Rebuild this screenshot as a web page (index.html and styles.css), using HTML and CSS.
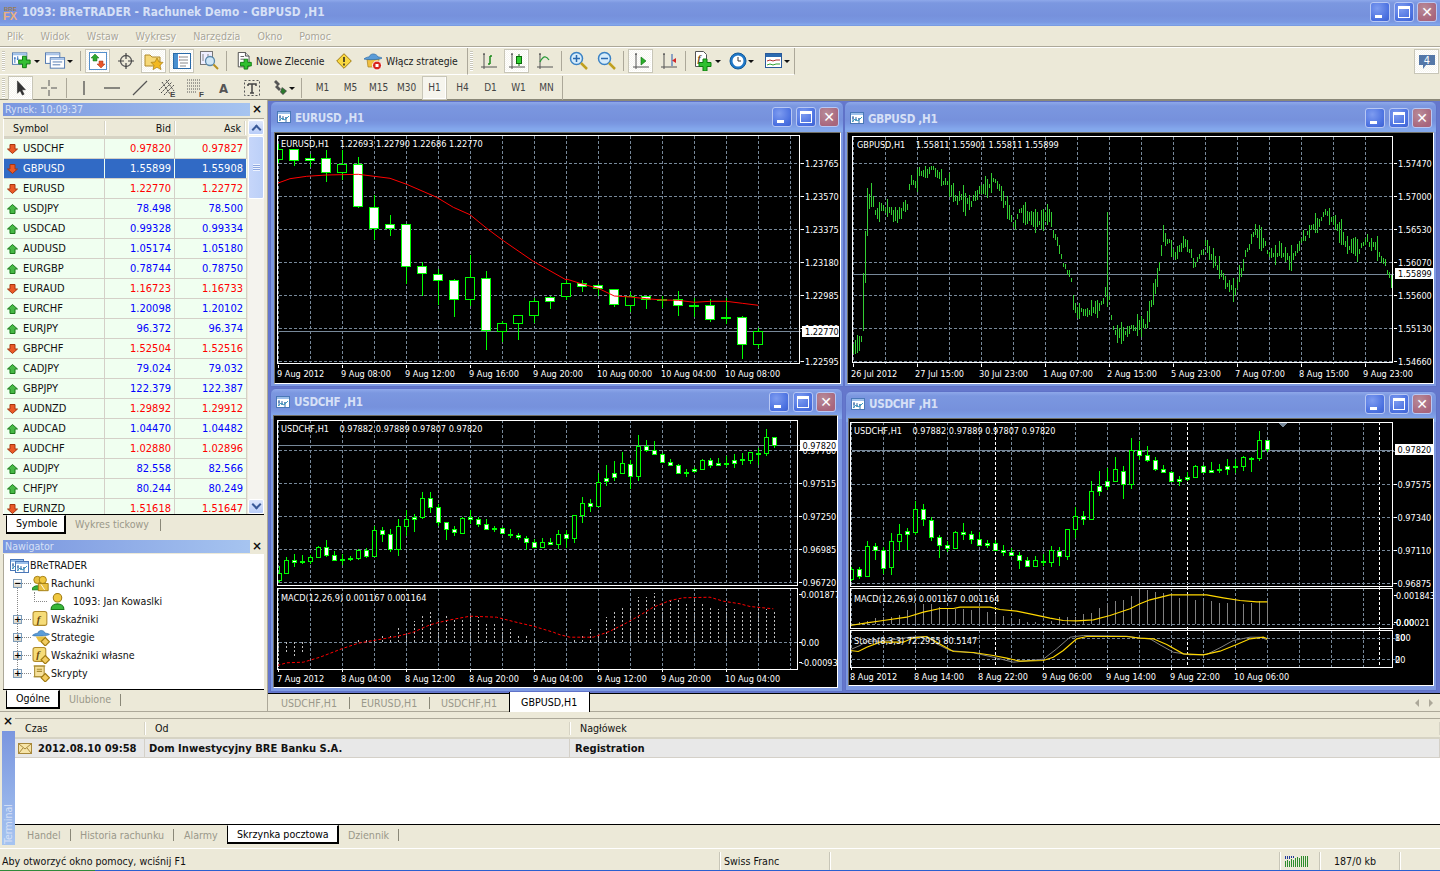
FILE: index.html
```html
<!DOCTYPE html>
<html lang="pl">
<head>
<meta charset="utf-8">
<title>1093: BReTRADER - Rachunek Demo - GBPUSD ,H1</title>
<link rel="stylesheet" href="styles.css">
</head>
<body>
<svg class="defs" aria-hidden="true">
  <symbol id="i-chartdoc" viewBox="0 0 14 14">
    <rect x=".5" y="1.5" width="13" height="11" fill="#fff" stroke="#4a78b8"/><rect x="1" y="2" width="12" height="2" fill="#9cc0ea"/>
    <path d="M3 5v6M2 7h2M6 6v4M5 9h2M9 7v5M8 8h2" stroke="#3a6aa8" fill="none"/><path d="M2 11l3-3 3 2 4-4" stroke="#3aa0c0" fill="none"/>
  </symbol>
  <symbol id="i-newchart" viewBox="0 0 22 18">
    <rect x=".5" y=".5" width="15" height="12" fill="#fff" stroke="#5078b0"/><rect x="1" y="1" width="14" height="2" fill="#9cc0ea"/>
    <path d="M3 5v6M2 6h2M6 4v4M5 7h2" stroke="#2f6fc0" fill="none"/>
    <path d="M11 4h4v4h4v4h-4v4h-4v-4H7V8h4z" fill="#35c035" stroke="#0e7a0e"/>
  </symbol>
  <symbol id="i-profiles" viewBox="0 0 22 18">
    <rect x=".5" y=".5" width="15" height="11" fill="#fff" stroke="#5078b0"/><rect x="1" y="1" width="14" height="2" fill="#a8c4ea"/>
    <rect x="5.500" y="5.500" width="15" height="11" fill="#fff" stroke="#5078b0"/><rect x="6" y="6" width="14" height="2" fill="#a8c4ea"/>
    <path d="M8 10h10M8 13h8" stroke="#5078b0"/>
  </symbol>
  <symbol id="i-market" viewBox="0 0 18 18">
    <rect x=".5" y=".5" width="17" height="17" fill="#fff" stroke="#5590cc"/>
    <path d="M6 2l4 4H8v3H4V6H2z" fill="#2ea82e" stroke="#176d17" stroke-width=".5"/><path d="M12 16l-4-4h2V9h4v3h2z" fill="#e8562a" stroke="#a03010" stroke-width=".5"/>
  </symbol>
  <symbol id="i-cross" viewBox="0 0 18 18"><circle cx="9" cy="9" r="5.500" fill="none" stroke="#555" stroke-width="1.300"/><path d="M9 1v6M9 11v6M1 9h6M11 9h6" stroke="#444" fill="none" stroke-width="1.200"/></symbol>
  <symbol id="i-folder" viewBox="0 0 20 20">
    <path d="M1 4h5l2 2h8v9H1z" fill="#f6d878" stroke="#b08a2a"/><path d="M13 7l2 4 4 .4-3 3 1 4.200-4-2.300-4 2.300 1-4.200-3-3 4-.4z" fill="#f2b820" stroke="#a87c10" stroke-width=".7"/>
  </symbol>
  <symbol id="i-nav" viewBox="0 0 18 18">
    <rect x=".5" y="1.500" width="17" height="15" fill="#fff" stroke="#2a6aa8"/><rect x="1" y="2" width="4" height="14" fill="#4a90d0"/>
    <path d="M7 5h8M7 8h8M7 11h8M7 14h6" stroke="#8a8a8a"/><path d="M6 5h1M6 8h1" stroke="#d03030"/>
  </symbol>
  <symbol id="i-zoomdoc" viewBox="0 0 20 20">
    <rect x=".5" y=".5" width="12" height="13" fill="#eef" stroke="#777"/><path d="M3 3v7M8 3v7" stroke="#888"/>
    <circle cx="10" cy="10" r="4.500" fill="#cfe6f6" stroke="#5a88aa" stroke-width="1.300"/><path d="M13.500 13.500l4.500 4.500" stroke="#b89020" stroke-width="2"/>
  </symbol>
  <symbol id="i-order" viewBox="0 0 18 20">
    <path d="M1.500.5h8l4 4v12h-12z" fill="#fff" stroke="#444"/><path d="M9.500.5v4h4" fill="#ddd" stroke="#444"/><path d="M4 5h4M4 8h4" stroke="#555"/>
    <path d="M8 8h4v3.500h4v4h-4V19H8v-3.500H4v-4h4z" fill="#2fc02f" stroke="#0e7a0e"/>
  </symbol>
  <symbol id="i-warn" viewBox="0 0 16 16"><path d="M8 .7L15.300 8 8 15.300.7 8z" fill="#f9d840" stroke="#a07a10"/><path d="M8 4v5M8 10.500v2" stroke="#222" stroke-width="1.500"/></symbol>
  <symbol id="i-hat" viewBox="0 0 20 20">
    <path d="M4 8h12l-1 8H5z" fill="#f2c040" stroke="#a88020" stroke-width=".7"/>
    <path d="M1 8c2 1 16 1 18-1-2-1-3-1-4-1-1-3-7-5-9 0-2 0-4 1-5 2z" fill="#5a9cd8" stroke="#2a6aa8" stroke-width=".7"/>
    <circle cx="14" cy="14.500" r="4.500" fill="#d8241c" stroke="#fff"/><rect x="12.500" y="13" width="3" height="3" fill="#fff"/>
  </symbol>
  <symbol id="i-axis" viewBox="0 0 18 18"><path d="M4 1v15M1 15h16" stroke="#555" fill="none"/><path d="M3 3l1-2 1 2M3 16l1 1 1-1" fill="#555"/></symbol>
  <symbol id="i-bars" viewBox="0 0 18 18"><use href="#i-axis"/><path d="M10 4v8M10 4h2M8 12h2" stroke="#1a8a1a" fill="none" stroke-width="1.500"/></symbol>
  <symbol id="i-candle" viewBox="0 0 18 18"><use href="#i-axis"/><path d="M11 2v12" stroke="#0a6a0a"/><rect x="8.500" y="4.500" width="5" height="7" fill="#30d030" stroke="#0a6a0a"/></symbol>
  <symbol id="i-line" viewBox="0 0 18 18"><use href="#i-axis"/><path d="M4 10c3-6 6-7 9-2" stroke="#2a9a3a" fill="none" stroke-width="1.300"/></symbol>
  <symbol id="i-zoomin" viewBox="0 0 20 20"><circle cx="7.500" cy="7.500" r="6" fill="#d6ecfb" stroke="#3a82c4" stroke-width="1.500"/><path d="M12 12l6 6" stroke="#c0a020" stroke-width="2.500"/><path d="M4 7.500h7M7.500 4v7" stroke="#2a6ab0" stroke-width="1.500"/></symbol>
  <symbol id="i-zoomout" viewBox="0 0 20 20"><circle cx="7.500" cy="7.500" r="6" fill="#d6ecfb" stroke="#3a82c4" stroke-width="1.500"/><path d="M12 12l6 6" stroke="#c0a020" stroke-width="2.500"/><path d="M4 7.500h7" stroke="#2a6ab0" stroke-width="1.500"/></symbol>
  <symbol id="i-scroll" viewBox="0 0 18 18"><use href="#i-axis"/><path d="M9 5l5 4-5 4z" fill="#2ab02a" stroke="#0a6a0a" stroke-width=".6"/></symbol>
  <symbol id="i-shift" viewBox="0 0 18 18"><use href="#i-axis"/><path d="M12 2v12" stroke="#2a5ab0"/><path d="M16 6l-4 2.500 4 2.500z" fill="#d02a2a"/></symbol>
  <symbol id="i-clock" viewBox="0 0 18 18"><circle cx="9" cy="9" r="8" fill="#1e78c8" stroke="#145a9a"/><circle cx="9" cy="9" r="5.500" fill="#fff"/><path d="M9 5v4h3" stroke="#333" fill="none"/></symbol>
  <symbol id="i-tmpl" viewBox="0 0 18 16"><rect x=".5" y=".5" width="16" height="14" fill="#fff" stroke="#2a5a9a"/><rect x="1" y="1" width="15" height="3" fill="#2a6ab0"/><path d="M2 8l3-1 3 1 3-1 4 0" stroke="#b03030" fill="none"/><path d="M2 12l3-1 3 1 3-1 4 0" stroke="#30a030" fill="none"/></symbol>
  <symbol id="i-group" viewBox="0 0 20 18">
    <circle cx="6" cy="5" r="4" fill="#e8c040" stroke="#a07a10"/><path d="M0 16c0-6 12-6 12 0z" fill="#38b038" stroke="#1a7a1a"/>
    <circle cx="12" cy="5" r="4" fill="#f0c840" stroke="#a07a10"/><path d="M7 9h11v8H7z" fill="#e8c040" stroke="#a07a10"/><path d="M10 10l4 6" stroke="#fff"/>
  </symbol>
  <symbol id="i-person" viewBox="0 0 14 16"><circle cx="7" cy="4.500" r="4" fill="#f0c840" stroke="#a07a10"/><path d="M1 15.500c0-7 12-7 12 0z" fill="#38b838" stroke="#1a7a1a"/></symbol>
  <symbol id="i-strat" viewBox="0 0 16 16"><path d="M0 6c2 1 14 1 16-1-2-1-3-1-4-1-1-3-6-4-7 0-2 0-4 1-5 2z" fill="#5a9cd8" stroke="#2a6aa8" stroke-width=".6"/><path d="M3 7h10l-3 5H6z" fill="#e8c040"/><path d="M12 8l4 4-4 4-4-4z" fill="#f2cc60" stroke="#a07a10"/></symbol>
  <symbol id="i-script" viewBox="0 0 16 16"><path d="M2 1h9v10H2z" fill="#f6e09a" stroke="#a88a30"/><path d="M1 1h11M1 11h10M4 4h5M4 6h5" stroke="#a88a30"/><path d="M12 8l4 4-4 4-4-4z" fill="#f2cc60" stroke="#a07a10"/></symbol>
  <symbol id="i-arrow" viewBox="0 0 16 18"><path d="M4 1v14l3-3 2.500 5 2-1-2.500-5h4z" fill="#333" stroke="#111" stroke-width=".5"/></symbol>
  <symbol id="i-plus" viewBox="0 0 18 18"><path d="M9 1v6M9 11v6M1 9h6M11 9h6" stroke="#555"/></symbol>
  <symbol id="i-vline" viewBox="0 0 18 18"><path d="M9 2v14" stroke="#444" stroke-width="1.200"/></symbol>
  <symbol id="i-hline" viewBox="0 0 18 18"><path d="M1 9h16" stroke="#444" stroke-width="1.200"/></symbol>
  <symbol id="i-trend" viewBox="0 0 18 18"><path d="M2 16L16 2" stroke="#555" stroke-width="1.200"/></symbol>
  <symbol id="i-tbox" viewBox="0 0 16 16"><rect x=".5" y=".5" width="15" height="15" fill="none" stroke="#555" stroke-dasharray="2 2"/><path d="M4 4h8v2M8 4v9M6 13h4M4 4v2" stroke="#444" stroke-width="1.500" fill="none"/></symbol>
  <symbol id="i-draw" viewBox="0 0 18 18"><path d="M5 1l4 4-2 2 3 3-2 2-4-4 2-2-3-3zM11 8l5 4-4 4-3-3z" fill="#555"/><path d="M11 9l4 3-3 3-2-2z" fill="#2a7a2a"/></symbol>
  <symbol id="i-msg" viewBox="0 0 18 16"><path d="M1 1h16v10H8l-3 4v-4H1z" fill="#5578a8"/></symbol>
  <symbol id="i-mail" viewBox="0 0 14 11"><rect x=".5" y=".5" width="13" height="10" fill="#f6e4a8" stroke="#a8883a"/><path d="M1 1l6 5 6-5M1 10l4-5M13 10L9 5" stroke="#a8883a" fill="none"/></symbol>
  <symbol id="i-gauge" viewBox="0 0 24 12"><path d="M1.500 12V6M3.500 12V5M5.500 12V6M7.500 12V4M9.500 12V5M11.500 12V3M13.500 12V2M15.500 12V3M17.500 12V1M19.500 12V1M21.500 12V1M23.500 12V1" stroke="#2c8c2c"/><path d="M1.500 4V1M3.500 4V1M5.500 4V1M7.500 3V1M9.500 3V1" stroke="#223a9a"/></symbol>
</svg>

<div class="app">
  <header class="app-title">
    <svg class="logo" viewBox="0 0 20 16"><text x="2" y="6" class="logo-a">BRE</text><text x="1" y="15" class="logo-b">FX</text></svg>
    <span class="app-title-text">1093: BReTRADER - Rachunek Demo - GBPUSD ,H1</span>
    <span class="caps app-caps">
      <span class="cap"><i class="g-min"></i></span><span class="cap"><i class="g-max"></i></span><span class="cap cap-x"><i class="g-x">✕</i></span>
    </span>
  </header>

  <nav class="menu">
    <span>Plik</span><span>Widok</span><span>Wstaw</span><span>Wykresy</span><span>Narzędzia</span><span>Okno</span><span>Pomoc</span>
  </nav>

  <div class="toolbars">
    <div class="tbrow tb1">
      <div class="tbgroup g1">
        <span class="grip"></span>
        <span class="tb drop w30"><svg class="ic-wide"><use href="#i-newchart"/></svg><b class="caret"></b></span>
        <span class="tb drop w31"><svg class="ic-wide"><use href="#i-profiles"/></svg><b class="caret"></b></span>
        <span class="sep sep-a"></span>
        <span class="tb on"><svg class="ic18"><use href="#i-market"/></svg></span>
        <span class="tb"><svg class="ic18"><use href="#i-cross"/></svg></span>
        <span class="tb on"><svg class="ic20"><use href="#i-folder"/></svg></span>
        <span class="tb on"><svg class="ic18"><use href="#i-nav"/></svg></span>
        <span class="tb"><svg class="ic20"><use href="#i-zoomdoc"/></svg></span>
        <span class="sep sep-b"></span>
        <span class="tb txt w96"><svg class="ic18"><use href="#i-order"/></svg><em>Nowe Zlecenie</em></span>
        <span class="tb"><svg class="ic16"><use href="#i-warn"/></svg></span>
        <span class="tb txt w105"><svg class="ic20"><use href="#i-hat"/></svg><em>Włącz strategie</em></span>
      </div>
      <div class="tbgroup g2">
        <span class="grip"></span>
        <span class="tb"><svg class="ic18"><use href="#i-bars"/></svg></span>
        <span class="tb on"><svg class="ic18"><use href="#i-candle"/></svg></span>
        <span class="tb"><svg class="ic18"><use href="#i-line"/></svg></span>
        <span class="sep sep-n"></span>
        <span class="tb"><svg class="ic20"><use href="#i-zoomin"/></svg></span>
        <span class="tb"><svg class="ic20"><use href="#i-zoomout"/></svg></span>
        <span class="sep sep-n"></span>
        <span class="tb on"><svg class="ic18"><use href="#i-scroll"/></svg></span>
        <span class="tb"><svg class="ic18"><use href="#i-shift"/></svg></span>
        <span class="sep sep-n"></span>
        <span class="tb drop w32"><svg class="ic20" viewBox="0 0 20 20"><path d="M1.500.5h8l3 3v12h-11z" fill="#fff" stroke="#555"/><text x="3.500" y="11" class="icon-f">f</text><path d="M9 8h4v3.500h4v4h-4V20H9v-4.500H5v-4h4z" fill="#2fc02f" stroke="#0e7a0e"/></svg><b class="caret"></b></span>
        <span class="tb drop w33"><svg class="ic18"><use href="#i-clock"/></svg><b class="caret"></b></span>
        <span class="tb drop w33"><svg class="ic18"><use href="#i-tmpl"/></svg><b class="caret"></b></span>
      </div>
      <span class="tb on msgbtn"><svg class="ic18"><use href="#i-msg"/></svg><em class="msgnum">4</em></span>
    </div>
    <div class="tbrow tb2">
      <span class="grip"></span>
      <span class="tb on"><svg class="ic16"><use href="#i-arrow"/></svg></span>
      <span class="tb"><svg class="ic18"><use href="#i-plus"/></svg></span>
      <span class="sep sep-c"></span>
      <span class="tb"><svg class="ic18"><use href="#i-vline"/></svg></span>
      <span class="tb"><svg class="ic18"><use href="#i-hline"/></svg></span>
      <span class="tb"><svg class="ic18"><use href="#i-trend"/></svg></span>
      <span class="tb"><svg class="ic20" viewBox="0 0 20 20"><path d="M1 12L12 1M3 15L14 4M6 17L16 7M4 4l8 12M8 2l8 11" stroke="#444" stroke-dasharray="2 1" fill="none"/><text x="12" y="19" class="icon-e">E</text></svg></span>
      <span class="tb"><svg class="ic20" viewBox="0 0 20 20"><path d="M1 2h14M1 5h14M1 8h14M1 11h14M1 14h10" stroke="#555" stroke-dasharray="1 1"/><text x="13" y="19" class="icon-e">F</text></svg></span>
      <span class="tb"><em class="tool-a">A</em></span>
      <span class="tb"><svg class="ic16"><use href="#i-tbox"/></svg></span>
      <span class="tb w31"><svg class="ic18"><use href="#i-draw"/></svg><b class="caret"></b></span>
      <span class="sep sep-d"></span>
      <span class="tf">M1</span><span class="tf">M5</span><span class="tf">M15</span><span class="tf">M30</span><span class="tf on">H1</span><span class="tf">H4</span><span class="tf">D1</span><span class="tf">W1</span><span class="tf">MN</span>
      <span class="sep sep-e"></span>
    </div>
  </div>

  <div class="main">
    <aside class="side">
      <section class="market">
        <div class="dock-title"><span class="dock-name">Rynek: 10:09:37</span><span class="dock-x">×</span></div>
        <div class="mw">
          <div class="mw-list">
            <div class="mw-head"><span class="c-sym">Symbol</span><span class="c-num">Bid</span><span class="c-num c-last">Ask</span></div>
            <div id="rows" class="mw-rows"></div>
          </div>
          <div class="sbar">
            <span class="sb-btn"><i class="chev-up"></i></span>
            <span class="sb-thumb"><i class="sb-lines"></i></span>
            <span class="sb-track"></span>
            <span class="sb-btn"><i class="chev-dn"></i></span>
          </div>
        </div>
        <div class="tabs">
          <span class="tab on t-sym">Symbole</span><span class="tab t-tick">Wykres tickowy</span>
        </div>
      </section>
      <section class="navig">
        <div class="dock-title"><span class="dock-name">Nawigator</span><span class="dock-x">×</span></div>
        <div class="tree">
          <div class="tn root"><svg class="ic14"><use href="#i-chartdoc"/></svg><svg class="ic14 over"><use href="#i-chartdoc"/></svg><span>BReTRADER</span></div>
          <div class="tn lv1"><i class="box">−</i><i class="dots"></i><svg class="ic-t"><use href="#i-group"/></svg><span>Rachunki</span></div>
          <div class="tn lv2"><i class="dots2"></i><svg class="ic-t"><use href="#i-person"/></svg><span>1093: Jan Kowaslki</span></div>
          <div class="tn lv1"><i class="box">+</i><i class="dots"></i><svg class="ic-t" viewBox="0 0 16 16"><rect x=".5" y=".5" width="13" height="13" rx="2" fill="#f6dc78" stroke="#b08a2a"/><text x="4" y="11" class="icon-f">f</text></svg><span>Wskaźniki</span></div>
          <div class="tn lv1"><i class="box">+</i><i class="dots"></i><svg class="ic-t"><use href="#i-strat"/></svg><span>Strategie</span></div>
          <div class="tn lv1"><i class="box">+</i><i class="dots"></i><svg class="ic-t" viewBox="0 0 16 16"><rect x=".5" y=".5" width="12" height="13" rx="2" fill="#f6dc78" stroke="#b08a2a"/><text x="3.500" y="10.500" class="icon-f">f</text><path d="M12 8l4 4-4 4-4-4z" fill="#f2cc60" stroke="#a07a10"/></svg><span>Wskaźniki własne</span></div>
          <div class="tn lv1"><i class="box">+</i><i class="dots"></i><svg class="ic-t"><use href="#i-script"/></svg><span>Skrypty</span></div>
          <i class="tree-spine"></i>
        </div>
        <div class="tabs">
          <span class="tab on t-og">Ogólne</span><span class="tab t-ul">Ulubione</span>
        </div>
      </section>
    </aside>

    <div class="work">
      <div class="mdi">
        <article class="win w1">
          <div class="win-title"><svg class="ic14"><use href="#i-chartdoc"/></svg><span class="win-name">EURUSD ,H1</span>
            <span class="caps"><span class="cap"><i class="g-min"></i></span><span class="cap"><i class="g-max"></i></span><span class="cap cap-x"><i class="g-x">✕</i></span></span></div>
          <div class="client" id="c1"></div>
        </article>
        <article class="win w2">
          <div class="win-title"><svg class="ic14"><use href="#i-chartdoc"/></svg><span class="win-name">GBPUSD ,H1</span>
            <span class="caps"><span class="cap"><i class="g-min"></i></span><span class="cap"><i class="g-max"></i></span><span class="cap cap-x"><i class="g-x">✕</i></span></span></div>
          <div class="client" id="c2"></div>
        </article>
        <article class="win w3">
          <div class="win-title"><svg class="ic14"><use href="#i-chartdoc"/></svg><span class="win-name">USDCHF ,H1</span>
            <span class="caps"><span class="cap"><i class="g-min"></i></span><span class="cap"><i class="g-max"></i></span><span class="cap cap-x"><i class="g-x">✕</i></span></span></div>
          <div class="client" id="c3"></div>
        </article>
        <article class="win w4">
          <div class="win-title"><svg class="ic14"><use href="#i-chartdoc"/></svg><span class="win-name">USDCHF ,H1</span>
            <span class="caps"><span class="cap"><i class="g-min"></i></span><span class="cap"><i class="g-max"></i></span><span class="cap cap-x"><i class="g-x">✕</i></span></span></div>
          <div class="client" id="c4"></div>
        </article>
      </div>
      <div class="chart-tabs">
        <span class="ctab">USDCHF,H1</span><span class="ctab">EURUSD,H1</span><span class="ctab ct-last">USDCHF,H1</span><span class="ctab-on">GBPUSD,H1</span>
        <span class="ct-arrows"><i class="ct-l"></i><i class="ct-r"></i></span>
      </div>
    </div>
  </div>

  <section class="terminal">
    <div class="term-strip"><span class="term-x">×</span><div class="term-name"><span>Terminal</span></div></div>
    <div class="term-body">
      <div class="t-head"><span class="th1">Czas</span><span class="th2">Od</span><span class="th3">Nagłówek</span></div>
      <div class="t-row">
        <span class="td1"><svg class="ic-mail"><use href="#i-mail"/></svg>2012.08.10 09:58</span><span class="td2">Dom Inwestycyjny BRE Banku S.A.</span><span class="td3">Registration</span>
      </div>
      <div class="t-empty"></div>
      <div class="tabs term-tabs">
        <span class="tab tt1">Handel</span><span class="tab tt2">Historia rachunku</span><span class="tab tt3">Alarmy</span><span class="tab on tt4">Skrzynka pocztowa</span><span class="tab tt5">Dziennik</span>
      </div>
    </div>
  </section>

  <footer class="status">
    <span class="st st1">Aby otworzyć okno pomocy, wciśnij F1</span>
    <span class="st st2">Swiss Franc</span>
    <span class="st st3"></span>
    <span class="st st4"><svg class="ic-gauge"><use href="#i-gauge"/></svg></span>
    <span class="st st5">187/0 kb</span>
    <span class="st st6"></span>
  </footer>
  <div class="taskline"></div>
</div>
<script src="script.js"></script>
</body>
</html>
```
FILE: styles.css
```css
* { box-sizing: border-box; }
html, body { margin: 0; height: 100%; overflow: hidden; }
body {
  width: 1440px; height: 871px; background: #ece9d8; color: #111;
  font: 10.600px/1 "DejaVu Sans Condensed", "DejaVu Sans", "Liberation Sans", sans-serif;
}
i, em, b { font-style: normal; font-weight: normal; }
.defs { position: absolute; width: 0; height: 0; }
.app { display: flex; flex-direction: column; width: 1440px; height: 871px; }
.icon-f { font: italic bold 10px "Liberation Serif", serif; fill: #6a4a10; }
.icon-e { font: bold 8px "Liberation Sans", sans-serif; fill: #444; }

/* title bars */
.app-title {
  height: 26px; flex: none; display: flex; align-items: center; padding: 0 3px 0 2px;
  background: linear-gradient(#8ea8ea 0, #7b97e0 3px, #7691dc 16px, #7a98e2 22px, #84a8ec 25px, #6f8fd8 26px);
}
.logo { width: 20px; height: 16px; margin-bottom: 1px; }
.logo-a { font: bold 6px "Liberation Sans", sans-serif; fill: #9a7a50; }
.logo-b { font: bold 11px "Liberation Sans", sans-serif; fill: #eab080; }
.app-title-text { font-weight: bold; font-size: 11.800px; color: #d6e0f6; }
.caps { margin-left: auto; display: flex; gap: 3.500px; }
.app-caps { padding-bottom: 3px; }
.cap {
  width: 20px; height: 20px; border: 1px solid #b8c8f4; border-radius: 3px; position: relative;
  background: radial-gradient(circle at 35% 30%, #7e9cf0, #4a70e0 70%, #3f62d0);
  display: block;
}
.cap-x { background: radial-gradient(circle at 35% 30%, #b88b98, #a8657c 75%); }
.g-min { position: absolute; left: 4px; bottom: 3px; width: 7px; height: 3px; background: #fff; }
.g-max { position: absolute; left: 3px; top: 3px; width: 12px; height: 12px; border: 1px solid #fff; border-top-width: 3px; }
.g-x { position: absolute; inset: 0; color: #fff; font: bold 14px/18px "DejaVu Sans", sans-serif; text-align: center; }

/* menu */
.menu { height: 20px; flex: none; display: flex; align-items: center; padding-left: 7px; gap: 17px; color: #a8a598; text-shadow: 1px 1px 0 #fff; }

/* toolbars */
.toolbars { height: 54px; flex: none; border-top: 1px solid #aca899; display: flex; flex-direction: column; position: relative; border-bottom: 1px solid #8a8878; }
.tbrow { display: flex; align-items: center; }
.tb1 { height: 28px; border-top: 1px solid #fff; }
.tb2 { height: 25px; padding-left: 2px; padding-top: 1px; gap: 3px; }
.tbgroup { display: flex; align-items: center; height: 27px; gap: 3px; border-bottom: 1px solid #fff; }
.g1 { width: 468px; padding-left: 2px; border-right: 1px solid #aca899; }
.g2 { width: 327px; padding-left: 2px; border-right: 1px solid #aca899; }
.grip { width: 3px; height: 20px; background: repeating-linear-gradient(#c8c6b8 0 1px, #fff 1px 2px); flex: none; }
.tb { width: 25px; height: 24px; flex: none; display: flex; align-items: center; justify-content: center; border: 1px solid transparent; color: #222; }
.tb.on { border-color: #c8c6b8; background: repeating-conic-gradient(#f6f5ee 0 25%, #fff 0 50%) 0 0 / 2px 2px; box-shadow: inset -1px -1px 0 #fff; }
.drop { justify-content: flex-start; gap: 1px; padding-left: 3px; }
.w30 { width: 30px; } .w31 { width: 31px; } .w32 { width: 32px; } .w33 { width: 33px; }
.w96 { width: 96px; } .w105 { width: 105px; }
.txt { justify-content: flex-start; padding-left: 3px; gap: 2px; font-size: 10.300px; }
.w105.txt { gap: 3px; }
.txt em { white-space: nowrap; }
.caret { width: 0; height: 0; border: 3px solid transparent; border-top: 3px solid #111; border-bottom: 0; flex: none; }
.sep { flex: none; width: 1px; height: 20px; background: #aca899; }
.sep-a { margin: 0 1px 0 5px; }
.sep-b { margin: 0 2px 0 1px; }
.sep-n { margin: 0 1px 0 1px; }
.ic14 { width: 14px; height: 14px; flex: none; }
.ic16 { width: 16px; height: 16px; flex: none; }
.ic18 { width: 18px; height: 18px; flex: none; }
.ic20 { width: 20px; height: 20px; flex: none; }
.ic-wide { width: 21px; height: 18px; flex: none; }
.msgbtn { margin-left: auto; margin-right: 1px; height: 25px; position: relative; }
.msgnum { position: absolute; left: 7px; top: 5px; width: 10px; text-align: center; color: #fff; font-size: 11px; }
.tool-a { font-size: 13px; color: #555; font-weight: bold; }
.sep-c { margin: 0 1px 0 2px; }
.sep-d { margin: 0 5px 0 0; }
.sep-e { height: 25px; }
.tf { width: 25px; height: 24px; display: flex; align-items: center; justify-content: center; color: #444; font-size: 10px; border: 1px solid transparent; flex: none; }
.tf.on { border-color: #c8c6b8; background: #f6f5ee; box-shadow: inset -1px -1px 0 #fff; }

/* layout */
.main { display: flex; height: 612px; flex: none; }
.side { width: 268px; flex: none; display: flex; flex-direction: column; border-right: 1px solid #aca899; }
.market { height: 437px; padding: 3px 3px 0 3px; display: flex; flex-direction: column; }
.navig { flex: 1; padding: 3px 3px 0 3px; display: flex; flex-direction: column; border-bottom: 1px solid #aca899; }

.dock-title { height: 13px; display: flex; align-items: center; flex: none; justify-content: space-between; }
.dock-name { width: 247px; height: 13px; padding-left: 2px; background: linear-gradient(90deg, #7a96df, #a6c4f0); color: #d6e0f6; line-height: 13px; }
.dock-x { width: 14px; text-align: center; font: bold 12px/13px "DejaVu Sans", sans-serif; color: #111; }

.mw { flex: 1; min-height: 0; display: flex; margin-top: 2px; border-top: 1px solid #aca899; border-left: 1px solid #fff; overflow: hidden; }
.mw-list { width: 243px; flex: none; overflow: hidden; }
.mw-head { height: 20px; display: grid; grid-template-columns: 101px 70px 70px; align-items: center; border-bottom: 3px solid #d6d3c4; }
.mw-head span { height: 14px; line-height: 14px; border-right: 1px solid #d6d3c4; box-shadow: 1px 0 0 #fff; }
.c-sym { padding-left: 9px; }
.c-num { text-align: right; padding-right: 3px; }
.mw-rows { display: block; }
.row { height: 20px; display: grid; grid-template-columns: 101px 70px 72px; background: #f0fff0; border-bottom: 1px solid #d4d0c8; color: #111; font-size: 11px; }
.row > span { display: flex; align-items: center; border-right: 1px solid #d4d0c8; height: 19px; }
.row .sym { padding-left: 3px; gap: 5px; }
.row .num { justify-content: flex-end; padding-right: 3px; }
.down .num { color: #ff0000; }
.up .num { color: #0000ff; }
.row.sel { background: #316ac5; color: #fff; }
.row.sel .num { color: #fff; }
.row.sel > span { border-right-color: #f0fff0; }
.arr { width: 11px; height: 10px; flex: none; }

.sbar { width: 16px; flex: none; display: flex; flex-direction: column; margin-left: 1px; background: #f4f3ee; }
.sb-btn { height: 15px; flex: none; margin: 1px 0 0; border: 1px solid #fff; border-radius: 2px; background: linear-gradient(#dfe8fc, #b9cdf8); display: flex; align-items: center; justify-content: center; }
.sb-thumb { height: 63px; flex: none; margin-top: 1px; border: 1px solid #fff; border-radius: 2px; background: linear-gradient(90deg, #c6d6fa, #bcd0f8); display: flex; align-items: center; justify-content: center; }
.sb-lines { width: 7px; height: 7px; background: repeating-linear-gradient(#eef3fe 0 1px, #8ea8e0 1px 2px); }
.sb-track { flex: 1; }
.chev-up, .chev-dn { width: 7px; height: 7px; border: solid #3a5a98; border-width: 2px 0 0 2px; transform: translateY(2px) rotate(45deg); }
.chev-dn { transform: translateY(-2px) rotate(225deg); }

.tabs { height: 20px; flex: none; display: flex; border-top: 1px solid #000; color: #9a988a; align-items: center; }
.market .tabs { height: 20px; margin-bottom: 3px; }
.navig .tabs { margin-bottom: 2px; }
.tab { height: 19px; display: flex; align-items: center; }
.tab.on { background: #fff; color: #000; border: 1px solid #000; border-top: 1px solid #fff; border-right-width: 2px; border-bottom-width: 2px; margin-top: -1px; height: 19px; }
.t-sym { margin-left: 3px; width: 60px; padding-left: 9px; }
.t-tick { margin-left: 9px; width: 86px; border-right: 1px solid #8a8878; height: 12px; }
.t-og { margin-left: 3px; width: 54px; padding-left: 9px; }
.t-ul { margin-left: 9px; width: 52px; border-right: 1px solid #8a8878; height: 12px; }

.tree { flex: 1; margin-top: 1px; background: #fff; position: relative; padding-top: 2px; border-left: 1px solid #aca899; border-right: 1px solid #fff; }
.tn { height: 18px; display: flex; align-items: center; position: relative; z-index: 1; }
.root { padding-left: 6px; }
.root .ic14 { margin-right: -9px; }
.root .over { margin: 4px 0 0 0; }
.root span { margin-left: 1px; }
.lv1 { padding-left: 9px; }
.lv1 .ic-t { margin: 0 1px 0 1px; }
.lv2 { padding-left: 30px; }
.ic-t { width: 18px; height: 17px; flex: none; }
.lv2 .ic-t { width: 15px; margin: 0 8px 0 0; }
.box { width: 9px; height: 9px; border: 1px solid #7f9db9; background: linear-gradient(#fff, #d8d4c8); font: bold 9px/7px "DejaVu Sans", sans-serif; text-align: center; color: #000; flex: none; }
.dots { width: 9px; border-top: 1px dotted #888; flex: none; }
.dots2 { width: 13px; height: 10px; border-left: 1px dotted #888; border-bottom: 1px dotted #888; margin: -9px 3px 0 0; flex: none; }
.tree-spine { position: absolute; left: 13px; top: 29px; height: 92px; border-left: 1px dotted #888; }

/* chart windows */
.work { flex: 1; display: flex; flex-direction: column; min-width: 0; }
.mdi { height: 593px; flex: none; position: relative; background: #6577cc; border-top: 1px solid #8a8878; overflow: hidden; }
.win {
  position: absolute; display: flex; flex-direction: column;
  background: linear-gradient(#8ea8ea 0, #7b97e0 4px, #7691dc 18px, #7a98e2 22px, #84a8ec 27px) top / 100% 30px no-repeat, #7d99e2;
  border-radius: 6px 6px 0 0; border: 1px solid #5f72c8;
}
.w1 { left: 2px; top: 0; width: 574px; height: 286px; padding: 0 2px 2px 3px; }
.w2 { left: 576px; top: 0; width: 593px; height: 286px; padding: 0 2px 2px 2px; }
.w3 { left: 2px; top: 287px; width: 573px; height: 304px; padding: 0 4px 3px 2px; }
.w4 { left: 577px; top: 290px; width: 592px; height: 300px; padding: 0 2px 4px 2px; }
.win-title { height: 30px; flex: none; display: flex; align-items: flex-start; padding: 5px 2px 0 3px; }
.w2 .win-title { padding-top: 6px; }
.w3 .win-title { height: 26px; padding-top: 3px; }
.w4 .win-title { height: 26px; padding-top: 2px; }
.win-title .ic14 { margin-top: 3px; }
.win-name { font-weight: bold; font-size: 11.600px; letter-spacing: -.3px; color: #d6e0f6; margin-left: 4px; margin-top: 6px; }
.w3 .win-name, .w4 .win-name { margin-top: 5px; }
.client { flex: 1; min-height: 0; border: 1px solid; border-color: #716f64 #fff #fff #716f64; background: #000; overflow: hidden; }
.client svg { display: block; width: 100%; height: 100%; }
.chart { shape-rendering: crispEdges; }
.chart text { font: 9.100px "DejaVu Sans Condensed", "DejaVu Sans", sans-serif; fill: #fff; white-space: pre; shape-rendering: auto; }
.chart .boxtext { fill: #000; }
.grid { stroke: #778899; stroke-dasharray: 3 2; fill: none; }
.sepv { stroke: #fff; stroke-dasharray: 3 2; fill: none; }
.pline { stroke: #778899; fill: none; }
.frame { fill: none; stroke: #fff; }
.tick { stroke: #fff; }
.wick { stroke: #00ff00; }
.bw { fill: #fff; stroke: #00ff00; }
.bk { fill: #000; stroke: #00ff00; }
.bar { stroke: #32cd32; }
.ma { fill: none; stroke: #ff0000; shape-rendering: auto; }
.sig { fill: none; stroke: #ff0000; stroke-dasharray: 3 2; shape-rendering: auto; }
.hist { stroke: #c0c0c0; stroke-dasharray: 2 2; }
.hist2 { stroke: #808080; }
.yl { fill: none; stroke: #ffd700; shape-rendering: auto; stroke-width: 1.200; }
.gl { fill: none; stroke: #808080; shape-rendering: auto; }
.pbox { fill: #fff; }
.ptri { fill: #778899; }

/* chart tabs */
.chart-tabs { height: 19px; flex: none; display: flex; border-top: 1px solid #000; color: #9a988a; align-items: center; padding-left: 2px; position: relative; border-bottom: 1px solid #aca899; }
.ctab { width: 80px; padding-left: 11px; height: 12px; line-height: 12px; border-right: 1px solid #8a8878; flex: none; }
.ct-last { border-right: 0; }
.ctab-on { width: 80px; height: 20px; margin-top: -1px; background: #fff; color: #000; border: solid #000; border-width: 0 1px 0 0; padding: 5px 0 0 11px; flex: none; box-shadow: -1px 0 0 #000; }
.ct-arrows { margin-left: auto; display: flex; gap: 10px; margin-right: 7px; }
.ct-l, .ct-r { width: 0; height: 0; border: 4px solid transparent; }
.ct-l { border-right-color: #aca899; border-left: 0; }
.ct-r { border-left-color: #aca899; border-right: 0; }

/* terminal */
.terminal { height: 136px; flex: none; display: flex; }
.term-strip { width: 15px; flex: none; display: flex; flex-direction: column; align-items: center; padding-top: 3px; padding-left: 1px; }
.term-x { font: bold 12px/12px "DejaVu Sans", sans-serif; height: 16px; }
.term-name { width: 13px; flex: 1; margin-bottom: 3px; background: linear-gradient(#7a96df, #a6c4f0); display: flex; align-items: flex-end; justify-content: center; }
.term-name span { writing-mode: vertical-rl; transform: rotate(180deg); color: #d6e0f6; padding-top: 1px; }
.term-body { flex: 1; display: flex; flex-direction: column; margin-top: 6px; border-top: 1px solid #aca899; min-width: 0; }
.t-head { height: 20px; flex: none; display: grid; grid-template-columns: 130px 425px 1fr; align-items: center; border-bottom: 2px solid #d6d3c4; }
.t-head span { height: 13px; line-height: 13px; border-right: 1px solid #d6d3c4; box-shadow: 1px 0 0 #fff; }
.th1 { padding-left: 10px; } .th2 { padding-left: 10px; } .th3 { padding-left: 10px; }
.t-row { height: 19px; flex: none; display: grid; grid-template-columns: 130px 425px 1fr; background: #e8e8e8; align-items: center; font-weight: bold; font-family: "DejaVu Sans", sans-serif; font-size: 10px; border-bottom: 1px solid #d4d0c8; }
.t-row span { height: 19px; display: flex; align-items: center; border-right: 1px solid #d4d0c8; white-space: nowrap; }
.td1 { padding-left: 3px; gap: 6px; } .td2 { padding-left: 4px; } .td3 { padding-left: 5px; }
.ic-mail { width: 14px; height: 11px; flex: none; }
.t-empty { flex: 1; background: #fff; }
.term-tabs { margin-bottom: 3px; height: 21px; }
.tt1 { width: 56px; padding-left: 12px; height: 12px; border-right: 1px solid #8a8878; }
.tt2 { width: 103px; padding-left: 9px; height: 12px; border-right: 1px solid #8a8878; }
.tt3 { width: 53px; padding-left: 10px; }
.tab.tt4 { width: 112px; padding-left: 9px; }
.tt5 { margin-left: 9px; width: 51px; height: 12px; border-right: 1px solid #8a8878; }

/* status */
.status { height: 22px; flex: none; display: flex; align-items: center; border-top: 1px solid #fff; padding-top: 3px; }
.st { height: 18px; display: flex; align-items: center; flex: none; border-right: 1px solid #c8c6b8; box-shadow: 1px 0 0 #fff; white-space: nowrap; }
.st1 { width: 720px; padding-left: 2px; }
.st2 { width: 110px; padding-left: 4px; }
.st3 { width: 450px; }
.st4 { width: 40px; padding-left: 4px; }
.st5 { width: 80px; padding-left: 14px; }
.st6 { flex: 1; border-right: 0; }
.ic-gauge { width: 24px; height: 12px; }
.taskline { height: 1px; flex: none; background: linear-gradient(90deg, #2f8a3a 95px, #2a5fd0 95px); }
```
FILE: script.js
```js
// market watch rows
const RW = [
  ['USDCHF','0.97820','0.97827',0],['GBPUSD','1.55899','1.55908',0,1],['EURUSD','1.22770','1.22772',0],
  ['USDJPY','78.498','78.500',1],['USDCAD','0.99328','0.99334',1],['AUDUSD','1.05174','1.05180',1],
  ['EURGBP','0.78744','0.78750',1],['EURAUD','1.16723','1.16733',0],['EURCHF','1.20098','1.20102',1],
  ['EURJPY','96.372','96.374',1],['GBPCHF','1.52504','1.52516',0],['CADJPY','79.024','79.032',1],
  ['GBPJPY','122.379','122.387',1],['AUDNZD','1.29892','1.29912',0],['AUDCAD','1.04470','1.04482',1],
  ['AUDCHF','1.02880','1.02896',0],['AUDJPY','82.558','82.566',1],['CHFJPY','80.244','80.249',1],
  ['EURNZD','1.51618','1.51647',0]
];
const UP = '<svg class="arr" viewBox="0 0 11 10"><path d="M5.500 .5L10.500 5H8v4.500H3V5H.5z" fill="#46b846" stroke="#1c7a1c"/></svg>';
const DN = '<svg class="arr" viewBox="0 0 11 10"><path d="M5.500 9.500L10.500 5H8V.5H3V5H.5z" fill="#ea5a28" stroke="#a83410"/></svg>';
document.getElementById('rows').innerHTML = RW.map(r =>
  `<div class="row ${r[3] ? 'up' : 'down'}${r[4] ? ' sel' : ''}"><span class="sym">${r[3] ? UP : DN}${r[0]}</span><span class="num">${r[1]}</span><span class="num">${r[2]}</span></div>`
).join('');

// charts: coordinates are page pixels, the svg viewBox is offset to match its box
const p = v => Math.floor(v) + .5;
function chart(id, vb, draw) {
  const s = [];
  const g = {
    l: (a, b, c, d, k) => s.push(`<line x1="${p(a)}" y1="${p(b)}" x2="${p(c)}" y2="${p(d)}" class="${k}"/>`),
    r: (x, y, w, h, k) => s.push(`<rect x="${x}" y="${y}" width="${w}" height="${h}" class="${k}"/>`),
    t: (x, y, tx, k) => s.push(`<text x="${x}" y="${y}"${k ? ` class="${k}"` : ''}>${tx}</text>`),
    pl: (pts, k) => s.push(`<polyline points="${pts.map(q => q.join(',')).join(' ')}" class="${k}"/>`),
    raw: x => s.push(x)
  };
  draw(g);
  document.getElementById(id).innerHTML =
    `<svg class="chart" viewBox="${vb.join(' ')}">${s.join('')}</svg>`;
}
function clipOpen(g, id, r) {
  g.raw(`<clipPath id="${id}"><rect x="${r[0]}" y="${r[1]}" width="${r[2] - r[0]}" height="${r[3] - r[1]}"/></clipPath><g clip-path="url(#${id})">`);
}
function candles(g, data, ox, oy, left, w) {
  data.forEach(([x, hi, top, bot, low, white]) => {
    const X = p(ox + x / 3);
    g.l(X, oy + hi / 3, X, oy + low / 3, 'wick');
    const T = p(oy + top / 3), B = p(oy + bot / 3);
    if (B - T < 2 && white === 2) { g.r(X - left, T, w, 1, 'wick'); return; }
    g.r(X - left, T, w, Math.max(B - T, 1), white ? 'bw' : 'bk');
  });
}
const conv = (pts, ox, oy) => pts.map(([x, y]) => [+(ox + x / 3).toFixed(1), +(oy + y / 3).toFixed(1)]);
function vgrid(g, x0, step, n, t, b) { for (let i = 0; i < n; i++) g.l(x0 + i * step, t, x0 + i * step, b, 'grid'); }
function hgrid(g, ys, l, r) { ys.forEach(y => g.l(l, y, r, y, 'grid')); }
function yLabels(g, items, fx, lx) {
  items.forEach(([y, s]) => { g.l(fx, y, fx + 3, y, 'tick'); g.t(lx, Math.floor(y) + 4, s); });
}
function xLabels(g, x0, step, labels, fb, ty, lx0) {
  labels.forEach((s, i) => { g.l(x0 + i * step, fb, x0 + i * step, fb + 3, 'tick'); g.t(lx0 + i * step, ty, s); });
}

// EURUSD
const EUR1 = [[25,130,148,178,188,0],[73,148,148,181,196,1],[121,160,175,182,200,1],[169,148,176,217,245,1],[217,148,192,218,238,0],[265,168,193,320,322,1],[313,283,322,385,418,1],[361,343,373,386,407,1],[409,373,373,499,551,1],[457,484,499,520,586,1],[505,505,523,541,612,1],[553,535,541,598,650,1],[601,462,532,598,617,0],[649,511,535,691,749,1],[697,660,670,694,725,0],[745,646,646,670,719,0],[793,592,604,646,668,0],[841,586,592,604,626,1],[889,538,550,589,598,0]];
const EUR2 = [[67,537,550,559,573,1],[115,550,556,566,586,1],[163,565,568,613,620,1],[211,574,589,616,634,0],[259,589,589,598,626,1],[307,586,598,601,623,2],[355,570,598,616,647,1],[403,592,616,616,650,2],[451,595,616,658,665,1],[499,592,652,655,670,2],[547,646,652,733,776,1],[595,683,694,733,742,0]];
chart('c1', [275, 133, 565, 250], g => {
  const ys = [163.3, 196.3, 229.3, 262.3, 295.3, 328.3, 361.3];
  vgrid(g, 278.3, 32, 17, 135, 364);
  hgrid(g, ys, 278, 802);
  g.l(278, 331.3, 800, 331.3, 'pline');
  clipOpen(g, 'k1', [278, 136, 799, 364]);
  candles(g, EUR1, 270, 100, 5, 9);
  candles(g, EUR2, 560, 100, 5, 9);
  g.pl(conv([[22,250],[60,236],[110,229],[170,225],[265,223],[360,235],[410,253],[500,292],[550,322],[600,344],[650,385],[700,422],[790,484],[889,540]], 270, 100)
    .concat(conv([[19,537],[67,552],[115,565],[163,588],[211,591],[259,596],[307,600],[355,601],[403,607],[451,604],[499,604],[547,610],[595,616]], 560, 100)), 'ma');
  g.raw('</g>');
  g.r(277.5, 135.5, 522, 228, 'frame');
  yLabels(g, [[163.3,'1.23765'],[196.3,'1.23570'],[229.3,'1.23375'],[262.3,'1.23180'],[295.3,'1.22985'],[328.3,'1.22790'],[361.3,'1.22595']], 800, 805);
  g.r(802, 326, 37, 11, 'pbox'); g.t(805, 335, '1.22770', 'boxtext');
  xLabels(g, 278.3, 64, ['9 Aug 2012','9 Aug 08:00','9 Aug 12:00','9 Aug 16:00','9 Aug 20:00','10 Aug 00:00','10 Aug 04:00','10 Aug 08:00'], 364, 377, 277);
  g.t(281, 147, 'EURUSD,H1    1.22693 1.22790 1.22686 1.22770');
});

// GBPUSD
const GKEY = conv([[40,755],[50,735],[60,725],[65,700],[70,600],[76,470],[82,330],[88,290],[94,280],[100,310],[106,345],[130,320],[150,330],[160,350],[180,335],[190,320],[200,320],[208,260],[215,240],[225,250],[232,230],[238,200],[245,240],[255,210],[262,225],[270,205],[280,200],[300,235],[315,250],[325,240],[335,270],[347,300],[360,280],[375,310],[390,305],[410,280],[430,270],[450,245],[470,250],[485,290],[495,310],[510,350],[522,390],[530,340],[545,330],[565,350],[585,355],[600,360],[620,350],[630,340],[640,400],[650,420],[660,450],[670,490],[680,510],[690,510],[697,590],[705,630],[720,625],[735,640],[750,625],[770,620],[785,600],[797,580],[802,470],[808,620],[818,680],[825,705],[840,695],[860,690],[880,685],[900,680]], 840, 100)
  .concat([[1146,325],[1152,300],[1158,270],[1163,235],[1168,240],[1175,255],[1185,240],[1195,265],[1205,245],[1215,260],[1225,280],[1235,290],[1245,255],[1255,230],[1262,240],[1270,255],[1280,250],[1290,262],[1300,240],[1315,225],[1327,212],[1337,225],[1347,245],[1357,250],[1367,240],[1377,250],[1385,265],[1390,280]]);
const SPIKE = {863: [272, 330], 865: [230, 282], 867: [187, 235], 1107: [211, 306]};
chart('c2', [848, 133, 585, 250], g => {
  const ys = [163.3, 196.3, 229.3, 262.3, 295.3, 328.3, 361.3];
  vgrid(g, 853.3, 32, 17, 136, 363);
  hgrid(g, ys, 853, 1395);
  g.l(853, 274.3, 1393, 274.3, 'pline');
  let seed = 7;
  const rnd = () => (seed = (seed * 16807) % 2147483647) / 2147483647;
  clipOpen(g, 'k2', [853, 137, 1392, 363]);
  for (let x = 853; x <= 1391; x += 2) {
    let i = 0; while (i < GKEY.length - 2 && GKEY[i + 1][0] < x) i++;
    const [a, b] = GKEY[i], [c, d] = GKEY[i + 1];
    const y = b + (d - b) * Math.min(1, Math.max(0, (x - a) / (c - a))) + (rnd() - .5) * 6;
    const h = 2 + rnd() * rnd() * 12;
    const sp = SPIKE[x];
    const top = sp ? sp[0] : y - h, bot = sp ? sp[1] : y + h;
    g.l(x, top, x, bot, 'bar');
  }
  g.raw('</g>');
  g.r(852.5, 136.5, 540, 226, 'frame');
  yLabels(g, [[163.3,'1.57470'],[196.3,'1.57000'],[229.3,'1.56530'],[262.3,'1.56070'],[295.3,'1.55600'],[328.3,'1.55130'],[361.3,'1.54660']], 1393, 1398);
  g.r(1395, 268, 38, 11, 'pbox'); g.t(1398, 277, '1.55899', 'boxtext');
  xLabels(g, 853.3, 64, ['26 Jul 2012','27 Jul 15:00','30 Jul 23:00','1 Aug 07:00','2 Aug 15:00','5 Aug 23:00','7 Aug 07:00','8 Aug 15:00','9 Aug 23:00'], 363, 377, 851);
  g.t(857, 148, 'GBPUSD,H1    1.55811 1.55901 1.55811 1.55899');
});

// USDCHF left
const U1 = [[27,525,547,569,578,0],[49,498,508,547,547,0],[73,490,509,514,530,1],[97,492,511,514,520,2],[121,492,499,511,520,0],[145,465,469,499,503,0],[169,448,470,493,498,1],[193,482,493,508,512,1],[217,490,505,507,524,2],[241,495,502,505,510,2],[265,475,477,503,509,0],[289,473,478,496,503,1],[313,406,418,497,497,0],[337,408,419,430,455,1],[361,415,430,475,484,1],[385,384,406,475,497,0],[409,358,385,406,435,0],[433,370,378,385,425,1],[457,303,322,380,386,0],[481,303,323,349,368,1],[505,339,349,394,406,1],[529,393,394,415,449,1],[553,405,415,424,435,1],[577,379,382,426,428,0],[601,358,379,385,401,1],[625,379,385,400,410,1],[649,385,400,415,418,1],[673,406,412,415,423,2],[697,409,413,427,430,1],[721,415,431,433,442,2],[745,427,433,440,447,1],[769,437,443,454,479,1],[793,445,455,469,472,1],[817,442,455,470,472,0],[841,441,455,460,464,1],[865,418,430,460,474,0],[889,418,430,442,472,1]];
const U2 = [[43,372,373,442,456,0],[67,318,337,373,396,0],[91,324,337,346,364,1],[115,247,274,346,347,0],[139,222,262,271,285,1],[163,212,247,259,270,1],[187,184,217,247,251,0],[211,208,220,256,296,1],[235,132,166,257,270,0],[259,148,166,178,185,1],[283,150,179,190,192,1],[307,187,191,214,218,1],[331,205,214,223,227,1],[355,220,223,247,250,1],[379,235,244,246,258,2],[403,228,236,241,248,1],[427,205,208,235,237,0],[451,203,208,223,232,1],[475,202,217,223,225,1],[499,197,216,218,230,2],[523,189,208,217,231,1],[547,188,206,208,222,2],[571,183,184,208,220,0],[595,172,186,187,222,2],[619,114,139,187,195,0],[643,139,140,162,172,1]];
const H1 = [[25,828],[49,790],[73,795],[97,785],[121,760],[265,745],[289,745],[313,745],[337,730],[361,730],[385,712],[409,730],[433,692],[457,674],[481,662],[505,692],[529,675],[553,682],[577,682],[601,675],[625,680],[649,695],[673,698],[697,700],[721,716],[745,730],[769,730],[793,745],[817,752]];
const H2 = [[43,745],[67,730],[91,716],[115,735],[139,678],[163,663],[187,645],[211,650],[235,620],[259,620],[283,606],[307,633],[331,628],[355,625],[379,638],[403,620],[427,640],[451,645],[475,655],[499,643],[523,655],[547,660],[571,658],[595,655],[619,655],[643,657]];
chart('c3', [274, 416, 563, 270], g => {
  vgrid(g, 278.3, 32, 17, 419, 584);
  vgrid(g, 278.3, 32, 17, 587, 668);
  hgrid(g, [449.3, 482.3, 515.3, 548.3, 581.3], 278, 801);
  hgrid(g, [641.3], 278, 801);
  g.l(278, 444.3, 800, 444.3, 'pline');
  clipOpen(g, 'k3', [278, 420, 798, 584]);
  candles(g, U1, 270, 390, 2, 4);
  candles(g, U2, 560, 390, 2, 4);
  g.raw('</g>');
  H1.forEach(([x, y]) => g.l(270 + x / 3, 641.3, 270 + x / 3, 390 + y / 3, 'hist'));
  H2.forEach(([x, y]) => g.l(560 + x / 3, 641.3, 560 + x / 3, 390 + y / 3, 'hist'));
  g.pl(conv([[22,825],[50,817],[100,815],[150,800],[215,775],[265,758],[310,750],[380,738],[430,725],[480,703],[530,690],[600,677],[680,680],[730,693],[790,707],[850,725]], 270, 390)
    .concat(conv([[0,733],[30,740],[100,740],[150,722],[200,697],[235,677],[280,650],[330,630],[370,622],[450,620],[490,632],[540,640],[570,648],[640,655]], 560, 390)), 'sig');
  g.r(277.5, 419.5, 520, 165, 'frame');
  g.r(277.5, 587.5, 520, 81, 'frame');
  yLabels(g, [[449.3,'0.97780'],[482.3,'0.97515'],[515.3,'0.97250'],[548.3,'0.96985'],[581.3,'0.96720']], 798, 802.5);
  g.r(800, 439, 37, 11, 'pbox'); g.t(802.5, 448, '0.97820', 'boxtext');
  yLabels(g, [[593.3,'0.001877'],[641.3,'0.00'],[661.3,'-0.00093']], 798, 801);
  xLabels(g, 278.3, 64, ['7 Aug 2012','8 Aug 04:00','8 Aug 12:00','8 Aug 20:00','9 Aug 04:00','9 Aug 12:00','9 Aug 20:00','10 Aug 04:00'], 668, 681, 277);
  g.t(281, 431, 'USDCHF,H1    0.97882 0.97889 0.97807 0.97820');
  g.t(281, 600, 'MACD(12,26,9) 0.001167 0.001164');
});

// USDCHF right
const V1 = [[4,530,535,565,570,0],[28,530,535,556,566,1],[52,450,466,556,557,0],[76,457,467,478,508,1],[100,470,478,532,550,1],[124,427,451,529,554,0],[148,400,431,451,482,0],[172,411,421,430,477,1],[196,332,355,423,432,0],[220,340,355,385,407,1],[244,378,389,439,452,1],[268,432,439,463,503,1],[292,452,463,472,485,1],[316,420,425,472,476,0],[340,396,424,430,447,1],[364,420,431,445,459,1],[388,425,446,463,467,1],[412,448,457,463,473,1],[436,448,457,477,478,1],[460,462,479,484,495,1],[484,472,484,494,497,1],[508,485,494,508,536,1],[532,498,509,526,527,1],[556,497,509,526,527,0],[580,490,510,512,527,2],[604,465,478,515,530,0],[628,470,481,496,527,1],[652,415,415,496,509,0],[676,350,376,415,443,0],[700,360,376,385,404,1],[724,270,302,385,386,0],[748,242,286,301,315,1],[772,232,272,286,298,1],[796,198,236,272,275,0],[820,225,241,280,326,1],[844,141,178,280,296,0],[868,150,178,193,208,1],[892,165,193,208,215,1]];
const V2 = [[46,198,208,235,242,1],[70,222,235,244,246,1],[94,240,244,271,275,1],[118,255,265,271,285,1],[142,245,259,266,270,1],[166,223,226,259,261,0],[190,222,226,244,247,1],[214,215,238,244,246,1],[238,220,235,237,246,2],[262,205,227,235,252,1],[286,205,226,227,246,2],[310,195,199,227,240,0],[334,198,202,203,243,2],[358,120,148,202,210,0],[382,147,148,174,183,1]];
const M1 = [[4,698],[28,695],[52,690],[76,683],[100,680],[124,678],[148,672],[172,657],[196,645],[220,640],[244,640],[268,650],[292,652],[316,654],[340,654],[364,658],[388,655],[412,665],[436,671],[460,675],[484,690],[508,686],[532,693],[556,695],[580,697],[604,690],[628,680],[652,680],[676,680],[700,670],[724,668],[748,652],[772,640],[796,630],[820,628],[844,615],[868,598],[892,597]];
const M2 = [[46,605],[70,608],[94,612],[118,622],[142,610],[166,627],[190,630],[214,630],[238,637],[262,637],[286,632],[310,640],[334,638],[358,632],[382,632]];
chart('c4', [849, 419, 584, 265], g => {
  vgrid(g, 851.3, 32, 17, 421, 586);
  vgrid(g, 851.3, 32, 17, 587, 627);
  vgrid(g, 851.3, 32, 17, 629, 666);
  [995.3, 1187.3, 1379.3].forEach(x => g.l(x, 421, x, 666, 'sepv'));
  hgrid(g, [450, 483.3, 516.3, 549.3, 582.3], 851, 1395);
  hgrid(g, [623.3, 637.7, 658.7], 851, 1395);
  g.l(851, 449, 1393, 449, 'pline');
  clipOpen(g, 'k4', [851, 422, 1392, 585]);
  candles(g, V1, 850, 390, 2, 4);
  candles(g, V2, 1140, 390, 2, 4);
  g.raw('</g>');
  M1.forEach(([x, y]) => g.l(850 + x / 3, 623.3, 850 + x / 3, 390 + y / 3, 'hist2'));
  M2.forEach(([x, y]) => g.l(1140 + x / 3, 623.3, 1140 + x / 3, 390 + y / 3, 'hist2'));
  g.pl(conv([[0,705],[50,697],[100,690],[170,680],[220,665],[270,654],[310,654],[330,650],[420,650],[450,657],[500,662],[540,670],[600,683],[640,690],[680,691],[730,688],[780,675],[840,655]], 850, 390)
    .concat(conv([[0,640],[30,628],[90,613],[200,613],[250,622],[300,630],[350,634],[382,634]], 1140, 390)), 'yl');
  g.pl(conv([[0,778],[30,765],[50,752],[100,752],[180,740],[230,738],[260,760],[300,780],[370,787],[430,800],[490,815],[580,806],[620,775],[660,740],[700,735],[830,737]], 850, 390)
    .concat(conv([[0,743],[30,745],[60,763],[100,785],[150,793],[200,792],[240,772],[280,750],[330,740],[360,740],[382,748]], 1140, 390)), 'gl');
  g.pl(conv([[0,780],[25,783],[50,770],[90,755],[160,755],[190,742],[230,738],[260,755],[310,783],[370,786],[430,795],[470,803],[510,812],[580,810],[610,800],[640,780],[680,745],[710,738],[830,738]], 850, 390)
    .concat(conv([[0,743],[40,745],[80,762],[130,790],[190,793],[240,782],[290,762],[330,745],[370,740],[382,745]], 1140, 390)), 'yl');
  g.r(850.5, 421.5, 542, 164, 'frame');
  g.r(850.5, 587.5, 542, 40, 'frame');
  g.r(850.5, 629.5, 542, 37, 'frame');
  g.raw('<path d="M1278 422h10l-5 5z" class="ptri"/>');
  yLabels(g, [[483.3,'0.97575'],[516.3,'0.97340'],[549.3,'0.97110'],[582.3,'0.96875']], 1393, 1397.5);
  g.r(1395, 443, 38, 11, 'pbox'); g.t(1397.5, 452, '0.97820', 'boxtext');
  yLabels(g, [[594.3,'0.001843'],[621.3,'0.00'],[621.3,'0.00021']], 1393, 1396);
  g.t(1395, 640, '100'); g.t(1395, 640, '80');
  g.t(1395, 662, '0'); g.t(1395, 662, '20');
  xLabels(g, 851.3, 64, ['8 Aug 2012','8 Aug 14:00','8 Aug 22:00','9 Aug 06:00','9 Aug 14:00','9 Aug 22:00','10 Aug 06:00'], 666, 679, 850);
  g.t(854, 433, 'USDCHF,H1    0.97882 0.97889 0.97807 0.97820');
  g.t(854, 601, 'MACD(12,26,9) 0.001167 0.001164');
  g.t(854, 643, 'Stoch(8,3,3) 72.2955 80.5147');
});
```
